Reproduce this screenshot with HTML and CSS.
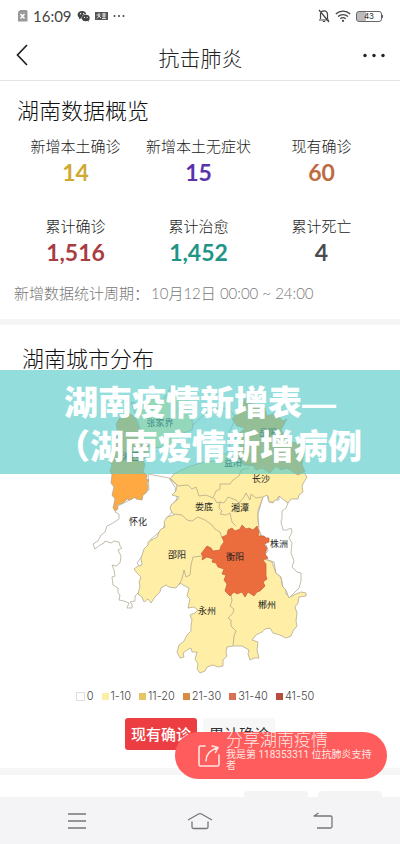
FILE: index.html
```html
<!DOCTYPE html>
<html lang="zh-CN">
<head>
<meta charset="utf-8">
<meta name="viewport" content="width=device-width, initial-scale=1">
<title>抗击肺炎</title>
<link rel="stylesheet" href="styles.css">
</head>
<body>
<div class="app">
  <div class="status">
    <svg width="11" height="14" viewBox="0 0 11 14"><path d="M3 1h6.500l1 1v10.500H1V3z" fill="#999"/><path d="M3.500 5l4 4.500m0-4.500l-4 4.500" stroke="#fff" stroke-width="1.500"/></svg>
    <span class="clock">16:09</span>
    <svg width="13" height="13" viewBox="0 0 13 13"><path d="M5.200 1C2.500 1 .6 2.700.6 4.800c0 1.200.6 2.200 1.600 2.900l-.4 1.500 1.700-.8 1.300.2C4.200 5.800 6.400 4 9.300 4.200 8.800 2.200 7.200 1 5.200 1z" fill="#444"/><ellipse cx="8.800" cy="8" rx="3.900" ry="3.300" fill="#444"/><path d="M10 10l1.500 2V9z" fill="#444"/><g fill="#fff"><circle cx="3.600" cy="3.800" r=".7"/><circle cx="6.600" cy="3.600" r=".7"/><circle cx="7.500" cy="7.300" r=".6"/><circle cx="10.200" cy="7.300" r=".6"/></g></svg>
    <svg width="13" height="10" viewBox="0 0 13 10"><path d="M0 1h13v8H0z" fill="#555"/><path d="M1.500 4h4M4 2v3L2 7.500M4 5l2 2M7 3h4M7 5h4M7 7.500h4M9 2v5" stroke="#fff" stroke-width=".8" fill="none"/></svg>
    <svg width="13" height="4" viewBox="0 0 13 4" fill="#444"><circle cx="1.500" cy="2" r="1"/><circle cx="6" cy="2" r="1"/><circle cx="10.500" cy="2" r="1"/></svg>
    <span class="space"></span>
    <svg width="12" height="14" viewBox="0 0 12 14" fill="none" stroke="#444" stroke-width="1.200"><path d="M2.500 10V4.500C3 2.700 4.300 1.800 6 1.800s3.500 1.500 3.500 3.500V10M1 11h10M4.800 12.500h2.400M1 1l10 12"/></svg>
    <svg width="16" height="12" viewBox="0 0 16 12" fill="none" stroke="#444" stroke-width="1.300"><path d="M.8 4C4.800.2 11.200.2 15.200 4M3 6.500c2.900-2.600 7.100-2.600 10 0M5.300 8.700c1.600-1.300 3.800-1.300 5.400 0"/><circle cx="8" cy="10.800" r=".5" fill="#444"/></svg>
    <span class="battery">43</span>
  </div>
  <header class="bar">
    <button class="icon" aria-label="返回"><svg width="12" height="22" viewBox="0 0 12 22"><path d="M11 1L1.500 11 11 21" fill="none" stroke="#222" stroke-width="1.700"/></svg></button>
    <h1>抗击肺炎</h1>
    <button class="icon" aria-label="更多"><svg width="22" height="5" viewBox="0 0 22 5" fill="#222"><circle cx="2" cy="2.500" r="1.700"/><circle cx="11" cy="2.500" r="1.700"/><circle cx="20" cy="2.500" r="1.700"/></svg></button>
  </header>
  <main>
    <section class="overview">
      <h2>湖南数据概览</h2>
      <dl class="stats">
        <div><dt>新增本土确诊</dt><dd class="gold">14</dd></div>
        <div><dt>新增本土无症状</dt><dd class="violet">15</dd></div>
        <div><dt>现有确诊</dt><dd class="orange">60</dd></div>
        <div><dt>累计确诊</dt><dd class="red">1,516</dd></div>
        <div><dt>累计治愈</dt><dd class="teal">1,452</dd></div>
        <div><dt>累计死亡</dt><dd class="dark">4</dd></div>
      </dl>
      <p class="period"><span>新增数据统计周期：</span><span>10月12日 00:00 ~ 24:00</span></p>
    </section>
    <section class="cities">
      <h2>湖南城市分布</h2>
      <svg class="map" viewBox="0 376 400 304" role="img" aria-label="湖南城市分布">
        <g stroke="#aaa08a" stroke-width=".7" stroke-linejoin="round">
          <path fill="#fff" d="M118 506L115 512 119 514 119 519 113 523 107 526 105 532 101 535 98 541 93 544 95 549 100 545 104 543 105 541 111 543 114 541 119 542 120 546 122 548 118 550 121 556 120 563 116 566 112 565 114 570 115 576 112 577 113 585 118 588 118 593 120 595 119 600 124 601 129 603 127 608 132 608 132 604 130 602 135 601 135 596 141 590 143 570 137 563 143 555 151 539 163 529 167 518 172 512 171 506 177 499 175 487 169 478 148 474 149 490z"/>
          <path fill="#ffeea5" d="M131 402L145 406 150 397 160 403 168 393 171 386 176 394 187 399 188 410 193 423 192 430 178 435 177 441 165 447 151 448 143 437z"/>
          <path fill="none" d="M192 426L210 409 228 408 236 418 229 432 230 446 224 458"/>
          <path fill="#ffa943" d="M123 414L127 412 135 417 139 428 141 437 149 446 148 455 143 460 145 465 143 472 147 475 146 479 149 480 147 483 148 488 146 493 143 495 142 500 136 499 135 497 130 500 127 499 123 503 117 505 118 509 115 511 113 508 115 499 112 495 114 487 111 483 112 475 110 471 112 465 109 461 113 454 114 443 118 434 116 424 119 419z"/>
          <path fill="#ffeea5" d="M170 479L174 474 181 470 191 466 204 462 216 461 224 453 233 460 245 465 258 466 268 468 281 466 293 470 303 471 307 477 304 482 302 486 303 492 299 495 298 499 291 499 288 503 283 500 278 497 276 502 269 502 268 496 263 497 261 503 258 510 258 522 260 531 262 550 265 559 272 562 276 573 281 577 282 585 286 590 286 594 290 597 296 594 301 592 306 593 306 596 299 597 298 603 295 607 297 613 296 621 297 626 293 631 291 636 286 638 280 635 273 633 270 628 265 629 262 632 256 635 252 640 258 642 257 650 259 658 254 658 250 660 248 654 249 650 242 646 233 646 227 647 226 652 227 656 223 660 223 666 218 667 213 665 207 667 205 671 200 673 197 669 198 664 195 659 197 652 192 652 191 648 187 650 183 653 184 657 180 658 177 652 179 645 184 641 187 635 191 631 191 625 192 620 190 615 195 613 198 610 194 607 188 608 190 599 187 596 189 588 183 585 180 583 176 588 169 587 166 585 161 588 160 592 155 597 151 603 148 599 144 602 142 597 138 594 140 586 139 582 141 577 137 573 134 569 138 566 142 565 141 558 144 549 148 545 148 542 157 537 160 530 165 527 164 522 167 517 174 515 170 509 171 505 177 500 179 497 172 495 176 491 177 485z"/>
          <path fill="#fff" d="M263 497L267 495 269 502 273 503 275 500 279 500 279 496 284 500 288 503 286 508 282 511 282 518 281 522 283 530 287 530 291 528 292 532 289 538 292 543 291 553 294 561 292 567 297 572 301 573 301 581 299 588 294 593 289 598 286 590 283 587 281 577 276 573 274 562 268 560 265 555 268 550 264 540 259 530 258 514z"/>
          <path fill="#ffa943" d="M232 419L240 410 246 397 252 404 265 408 267 416 275 413 283 421 287 419 281 430 288 441 300 444 304 453 302 465 305 471 298 475 287 468 281 470 276 466 270 473 262 468 256 470 253 465 244 465 235 455 241 447 235 437 245 428 237 426z"/>
          <path fill="none" d="M170 478L178 486 188 485 192 489 196 487 199 496 206 495 213 498 216 491 220 489 220 484 230 484 233 480 239 476 241 470 249 468M214 498L217 503 220 502 224 503 228 497 236 500 239 503 244 497 246 493 250 500 251 494 256 498 262 497M220 502L219 508 222 511 220 514 226 515 230 513 232 522 236 526M174 514L182 515 187 520 192 521 198 517 205 520 212 525 215 529 220 532 222 538M203 556L193 557 191 565 190 575 186 577 184 570 182 579 179 585M231 594L232 601 230 606 234 609 233 613 228 618 231 620 231 626 236 631 234 636 233 646"/>
          <path fill="#eb6c3d" stroke="#c75b35" d="M222 537L227 535 228 530 232 528 235 531 240 529 242 525 246 529 249 528 253 530 257 526 259 532 258 536 264 536 266 538 269 538 269 542 264 544 267 548 265 554 268 558 263 560 266 564 266 576 267 579 263 582 265 586 260 591 257 592 254 596 248 592 245 597 242 592 237 594 234 592 230 596 225 591 227 584 224 580 226 575 222 574 224 569 218 567 216 563 212 562 213 559 207 557 202 560 203 556 201 554 207 546 211 548 213 551 220 550 221 546 224 542z"/>
        </g>
        <g class="places">
          <text x="160" y="426">张家界</text><text x="131" y="460">湘西</text><text x="268" y="436">岳阳</text><text x="233" y="466">益阳</text><text x="261" y="482">长沙</text><text x="138" y="525">怀化</text><text x="204" y="510">娄底</text><text x="240" y="511">湘潭</text><text x="279" y="547">株洲</text><text x="177" y="558">邵阳</text><text x="235" y="560">衡阳</text><text x="207" y="614">永州</text><text x="267" y="608">郴州</text>
        </g>
      </svg>
      <div class="caption">湖南疫情新增表<b>—</b><span>（湖南疫情新增病例</span></div>
      <ul class="legend">
        <li class="l0">0</li><li class="l1">1-10</li><li class="l2">11-20</li><li class="l3">21-30</li><li class="l4">31-40</li><li class="l5">41-50</li>
      </ul>
      <div class="tabs"><button class="on">现有确诊</button><button>累计确诊</button></div>
    </section>
    <section class="trend">
      <h2>疫情趋势</h2>
      <button aria-label="新增"></button><button aria-label="累计"></button>
    </section>
  </main>
  <a class="share" href="#">
    <svg width="22" height="24" viewBox="0 0 22 24" fill="none" stroke="#ffe4e0" stroke-width="1.600" stroke-linejoin="round" stroke-linecap="round"><path d="M7 2H2.500Q1 2 1 3.500v17Q1 22 2.500 22h17q1.500 0 1.500-1.500V11M8 17c0-7 4-11 11-13M14 2l6 1.500-2.500 5"/></svg>
    <span class="words"><strong>分享湖南疫情</strong><small>我是第 118353311 位抗肺炎支持者</small></span>
  </a>
  <nav>
    <button aria-label="菜单"><svg width="20" height="16" viewBox="0 0 20 16"><path d="M1 1h18M1 8h18M1 15h18"/></svg></button>
    <button aria-label="主页"><svg width="26" height="18" viewBox="0 0 26 18"><path d="M1 8L11.500 2q1.500-.8 3 0L25 8M5 9.500V15q0 1.500 1.500 1.500h13Q21 16.500 21 15V9.500"/></svg></button>
    <button aria-label="后退"><svg width="20" height="18" viewBox="0 0 20 18"><path d="M5.500 1L1 4h16.500Q19 4 19 5.500v9q0 1.500-1.500 1.500H4"/></svg></button>
  </nav>
</div>
</body>
</html>
```
FILE: styles.css
```css
* { box-sizing: border-box; }
body {
  margin: 0;
  background: #fff;
  color: #333;
  font-family: "Noto Sans CJK SC", sans-serif;
}
h1, h2, p, dl, dd, ul { margin: 0; padding: 0; }
button {
  border: 0;
  padding: 0;
  background: none;
  font: inherit;
  color: inherit;
}
svg { display: block; }
.app {
  position: relative;
  display: flex;
  flex-direction: column;
  height: 100vh;
  overflow: hidden;
}
.status {
  display: flex;
  align-items: center;
  gap: 5px;
  height: 32px;
  padding: 0 18px 0 17px;
  flex: none;
}
.clock {
  font: 15px/20px Lato, sans-serif;
  color: #444;
}
.space { flex: 1; }
.battery {
  position: relative;
  width: 26px;
  height: 11px;
  border: 1px solid #666;
  border-radius: 3px;
  background: linear-gradient(90deg, #bbb 38%, #fff 38%);
  font: 8px/9px Inter, sans-serif;
  text-align: center;
}
.battery::after {
  content: "";
  position: absolute;
  right: -2px;
  top: 3px;
  width: 1px;
  height: 3px;
  background: #666;
}
.bar {
  display: grid;
  grid-template-columns: 1fr auto 1fr;
  align-items: center;
  flex: none;
  height: 49px;
  padding: 0 15px 0 16px;
  border-bottom: 1px solid #e4e4e4;
}
.bar .icon {
  justify-self: start;
  padding-bottom: 2px;
}
.bar .icon:last-child { justify-self: end; }
.bar h1 {
  padding-top: 2px;
  font-size: 21px;
  line-height: 30px;
  font-weight: 300;
  color: #222;
}
main {
  flex: 1;
  min-height: 0;
  overflow: hidden;
}
h2 {
  font-size: 22px;
  line-height: 32px;
  font-weight: 300;
  color: #111;
}
.overview {
  padding: 12px 17px 14px 14px;
  border-bottom: 6px solid #f5f5f6;
}
.overview h2 { padding-left: 3px; }
.stats {
  display: grid;
  grid-template-columns: repeat(3, 1fr);
  row-gap: 28px;
  padding-top: 10px;
  text-align: center;
  white-space: nowrap;
}
dt {
  font-size: 15px;
  line-height: 22px;
  font-weight: 300;
  color: #222;
}
dd {
  font: bold 23px/30px Lato, sans-serif;
}
.gold { color: #cfaa32; }
.violet { color: #5a32ab; }
.orange { color: #bd6b40; }
.red { color: #a93d42; }
.teal { color: #209486; }
.dark { color: #4b4b4f; }
.period {
  display: flex;
  gap: 2px;
  padding-top: 14px;
  font: 300 15px/24px Lato, "Noto Sans CJK SC", sans-serif;
  color: #777;
  white-space: nowrap;
}
.cities {
  position: relative;
  padding-top: 16px;
  border-bottom: 7px solid #f6f6f7;
}
.cities h2 { padding-left: 22px; }
.map {
  width: 100%;
  margin-top: 3px;
}
.places {
  font-size: 9px;
  text-anchor: middle;
  fill: #222;
}
.caption {
  position: absolute;
  top: 45px;
  left: 0;
  width: 100%;
  height: 104px;
  padding-top: 10px;
  background: rgba(84, 203, 200, 0.63);
  color: #fff;
  font-size: 34px;
  line-height: 42px;
  font-weight: 900;
  text-align: center;
  white-space: nowrap;
}
.caption b { font-family: "Liberation Sans", sans-serif; }
.caption span {
  display: block;
  padding-left: 18px;
}
.legend {
  display: flex;
  justify-content: center;
  gap: 8px;
  padding: 8px 10px 0 0;
  list-style: none;
  font: 300 11px/16px Inter, sans-serif;
  color: #444;
}
.legend li {
  display: flex;
  align-items: center;
  gap: 2px;
}
.legend li::before {
  content: "";
  width: 7px;
  height: 7px;
  background: #fff;
}
.legend .l0::before { border: 1px solid #ddd; }
.legend .l1::before { background: #fceea6; }
.legend .l2::before { background: #e8c563; }
.legend .l3::before { background: #d98b46; }
.legend .l4::before { background: #d96f55; }
.legend .l5::before { background: #b94c3e; }
.tabs {
  display: flex;
  justify-content: center;
  gap: 6px;
  padding: 14px 0 18px;
}
.tabs button {
  width: 72px;
  height: 32px;
  border-radius: 3px;
  background: #f8f7f8;
  font-size: 15px;
  line-height: 32px;
}
.tabs .on {
  background: #ec3e42;
  color: #fff;
  font-weight: 500;
}
.trend {
  display: flex;
  align-items: flex-start;
  gap: 10px;
  padding: 16px 18px 0 24px;
}
.trend h2 { flex: 1; }
.trend button {
  width: 64px;
  height: 30px;
  border-radius: 4px;
  background: #f5f4f5;
}
.share {
  position: absolute;
  right: 13px;
  bottom: 65px;
  width: 212px;
  height: 47px;
  display: flex;
  align-items: center;
  gap: 6px;
  padding: 0 10px 0 23px;
  border-radius: 24px;
  background: #fe5c5d;
  color: #ffe8e3;
  text-decoration: none;
}
.share svg { flex: none; }
.words {
  display: flex;
  flex-direction: column;
  padding-bottom: 12px;
}
.words strong {
  font-size: 17px;
  line-height: 20px;
  font-weight: 300;
}
.words small {
  font: 10px/11px Roboto, "Noto Sans CJK SC", sans-serif;
}
nav {
  display: flex;
  justify-content: space-around;
  align-items: center;
  flex: none;
  height: 47px;
  padding: 0 17px;
  background: #f4f3f5;
}
nav svg {
  fill: none;
  stroke: #777;
  stroke-width: 1.3;
  stroke-linejoin: round;
}
```
